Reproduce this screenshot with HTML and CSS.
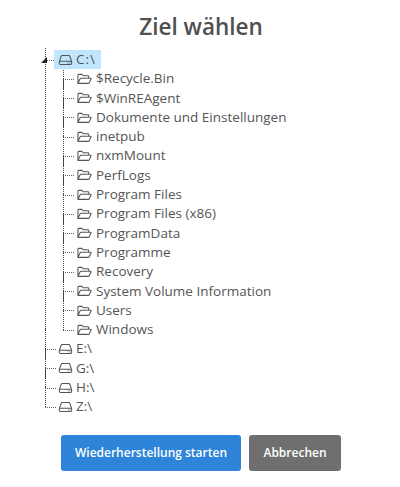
FILE: index.html
```html
<!DOCTYPE html>
<html lang="de">
<head>
<meta charset="utf-8">
<title>Ziel wählen</title>
<link rel="stylesheet" href="styles.css">
</head>
<body>
<svg class="defs" width="0" height="0" aria-hidden="true">
  <symbol id="drive" viewBox="0 0 16 16"><path d="M1 9.500 3.200 3.500a1 1 0 0 1 .9-.6h7.800a1 1 0 0 1 .9.600L15 9.500V12a1.200 1.200 0 0 1-1.200 1.200H2.200A1.200 1.200 0 0 1 1 12Zm0 0h14" fill="none" stroke="currentColor" stroke-width="1.200"/><path d="M10.500 11.300h1M12.500 11.300h1" stroke="currentColor" stroke-width="1.100"/></symbol>
  <symbol id="folder" viewBox="0 0 18 16"><path d="M1.500 13V3.500a.8.8 0 0 1 .8-.8h3.700l1.500 1.600h5.500a.8.8 0 0 1 .8.800V7M1.500 13l2.500-5.300a1 1 0 0 1 .9-.6h11a.7.7 0 0 1 .6 1l-2.200 4.400a1 1 0 0 1-.9.500Z" fill="none" stroke="currentColor" stroke-width="1.200" stroke-linejoin="round"/></symbol>
</svg>
<main class="page">
  <h1 class="title">Ziel wählen</h1>
  <ul class="tree">
    <li class="node open">
      <span class="toggle"></span>
      <div class="row selected"><svg class="icon drive"><use href="#drive"/></svg><span>C:\</span></div>
      <ul class="children">
        <li class="node"><div class="row"><svg class="icon folder"><use href="#folder"/></svg><span>$Recycle.Bin</span></div></li>
        <li class="node"><div class="row"><svg class="icon folder"><use href="#folder"/></svg><span>$WinREAgent</span></div></li>
        <li class="node"><div class="row"><svg class="icon folder"><use href="#folder"/></svg><span>Dokumente und Einstellungen</span></div></li>
        <li class="node"><div class="row"><svg class="icon folder"><use href="#folder"/></svg><span>inetpub</span></div></li>
        <li class="node"><div class="row"><svg class="icon folder"><use href="#folder"/></svg><span>nxmMount</span></div></li>
        <li class="node"><div class="row"><svg class="icon folder"><use href="#folder"/></svg><span>PerfLogs</span></div></li>
        <li class="node"><div class="row"><svg class="icon folder"><use href="#folder"/></svg><span>Program Files</span></div></li>
        <li class="node"><div class="row"><svg class="icon folder"><use href="#folder"/></svg><span>Program Files (x86)</span></div></li>
        <li class="node"><div class="row"><svg class="icon folder"><use href="#folder"/></svg><span>ProgramData</span></div></li>
        <li class="node"><div class="row"><svg class="icon folder"><use href="#folder"/></svg><span>Programme</span></div></li>
        <li class="node"><div class="row"><svg class="icon folder"><use href="#folder"/></svg><span>Recovery</span></div></li>
        <li class="node"><div class="row"><svg class="icon folder"><use href="#folder"/></svg><span>System Volume Information</span></div></li>
        <li class="node"><div class="row"><svg class="icon folder"><use href="#folder"/></svg><span>Users</span></div></li>
        <li class="node"><div class="row"><svg class="icon folder"><use href="#folder"/></svg><span>Windows</span></div></li>
      </ul>
    </li>
    <li class="node"><div class="row"><svg class="icon drive"><use href="#drive"/></svg><span>E:\</span></div></li>
    <li class="node"><div class="row"><svg class="icon drive"><use href="#drive"/></svg><span>G:\</span></div></li>
    <li class="node"><div class="row"><svg class="icon drive"><use href="#drive"/></svg><span>H:\</span></div></li>
    <li class="node"><div class="row"><svg class="icon drive"><use href="#drive"/></svg><span>Z:\</span></div></li>
  </ul>
  <div class="actions">
    <button class="btn primary" type="button">Wiederherstellung starten</button>
    <button class="btn secondary" type="button">Abbrechen</button>
  </div>
</main>
</body>
</html>
```
FILE: styles.css
```css
* { box-sizing: border-box; }
html, body { margin: 0; padding: 0; background: #fff; }
body { font-family: "Open Sans", "Noto Sans", sans-serif; color: #555; font-size: 13.500px; }
.defs { position: absolute; }
.page { width: 400px; height: 487px; padding-top: 13px; overflow: hidden; }
.title { margin: 0 0 9px; padding-left: 2px; text-align: center; font-size: 22.500px; line-height: 28px; font-weight: 600; color: #505050; }

.tree, .children { list-style: none; margin: 0; padding: 0; }
.tree { margin-left: 45px; position: relative; }
.children { margin-left: 8px; }

.node { position: relative; padding-left: 10px; }
.node::before { content: ""; position: absolute; left: 0; top: -10px; bottom: 0; border-left: 1px dotted #444; }
.node::after { content: ""; position: absolute; left: 0; top: 9.500px; width: 11px; border-top: 1px dotted #666; }
.node:last-child::before { bottom: auto; height: 20px; }
.node.open::before { top: -2px; }

.toggle { position: absolute; left: -4px; top: 7px; z-index: 1; width: 0; height: 0; border-style: solid; border-width: 0 0 6px 6px; border-color: transparent transparent #222 transparent; }

.row { display: inline-flex; align-items: center; gap: 3px; height: 19.300px; line-height: 19.300px; padding: 0 3px; white-space: nowrap; vertical-align: top; position: relative; z-index: 1; }
.row.selected { background: #bfe6fd; padding-right: 5px; margin-left: -1px; padding-left: 4px; letter-spacing: 1px; }

.icon { display: block; flex: none; height: 14px; color: #555; }
.icon.drive { width: 15px; }
.icon.folder { width: 17px; }

.actions { display: flex; justify-content: center; gap: 8px; margin-top: 18px; padding-left: 2px; }
.btn { height: 36px; border: 0; border-radius: 3px; padding: 0; font-family: inherit; font-size: 12px; font-weight: 600; color: #fff; }
.primary { width: 180px; background: #2d84d8; }
.secondary { width: 92px; background: #6f6f6f; }
```
